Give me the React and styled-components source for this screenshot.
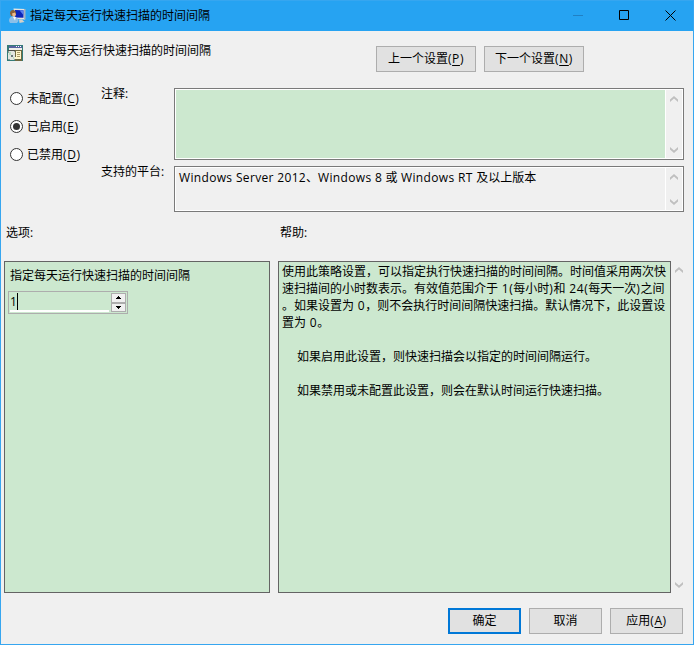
import { useState } from "react";
import styled, { createGlobalStyle } from "styled-components";

const helpLines = [
  "使用此策略设置，可以指定执行快速扫描的时间间隔。时间值采用两次快",
  "速扫描间的小时数表示。有效值范围介于 1(每小时)和 24(每天一次)之间",
  "。如果设置为 0，则不会执行时间间隔快速扫描。默认情况下，此设置设",
  "置为 0。",
  "",
  "    如果启用此设置，则快速扫描会以指定的时间间隔运行。",
  "",
  "    如果禁用或未配置此设置，则会在默认时间运行快速扫描。",
];

const states = [
  { id: "none", label: "未配置", hotkey: "C" },
  { id: "on", label: "已启用", hotkey: "E" },
  { id: "off", label: "已禁用", hotkey: "D" },
];

// wraps the latin runs so that they can be spaced apart from the CJK text
function Mixed({ text, spacing }) {
  return text
    .split(/([ -~]+)/)
    .map((part, i) =>
      i % 2 ? (
        <Latin key={i} spacing={spacing}>
          {part}
        </Latin>
      ) : (
        part
      )
    );
}

function Hotkey({ children }) {
  return (
    <Latin spacing="0.6px">
      (<u>{children}</u>)
    </Latin>
  );
}

function PolicyIcon() {
  return (
    <svg width="17" height="16" viewBox="0 0 17 16">
      <path d="M4.500.5L16 1v10.500L6 11z" fill="#e4e4e0" />
      <path d="M15 1h1.500v10.500H15z" fill="#a9b3bd" />
      <path d="M6 2l8.500.3v7.500L6 9.500z" fill="#0c25b8" />
      <path d="M10.500 2.200l4 .1v5z" fill="#5b82ee" />
      <path d="M10 11.500h3l2.500 2.500-5 1z" fill="#d4d0c8" />
      <path d="M1 5.500Q1 2 4 2t3 3.500L6 8H2z" fill="#8b6238" />
      <path d="M3 5.500l3-1 1 2-1.500 3H4z" fill="#efbd8c" />
      <path d="M0 13q0-4.500 4-4.500 5 0 5.500 4.500L8 15H1z" fill="#8cbfe8" />
      <path d="M4 9l2 3.500L7 9z" fill="#f4f8fc" />
    </svg>
  );
}

function SettingIcon() {
  return (
    <svg width="16" height="16" viewBox="0 0 16 16" shapeRendering="crispEdges">
      <path d="M0 0h16v16H0z" fill="#357b78" />
      <path d="M2 1h13v2H2z" fill="#5663a0" />
      <path d="M9 1h1v1H9zM11 1h1v1h-1zM13 1h1v1h-1z" fill="#ffffff" />
      <path d="M2 3h13v2H2z" fill="#eeeee9" />
      <path d="M1 5h14v1H1z" fill="#4c4d4a" />
      <path d="M1 6h7v9H1z" fill="#8d9a99" />
      <path d="M2 6h5v1h1v7H7v1H3v-1H1V8h1z" fill="#e2e5e0" />
      <path d="M2 7h2v3H2zM6 12h1v2H6z" fill="#b6dbbd" />
      <path d="M4 10h2v2H4z" fill="#69777a" />
      <path d="M8 5h7v11H8z" fill="#6f6942" />
      <path d="M9 6h5v8H8v-2h1z" fill="#fff5cb" />
      <path d="M10 7h3v1h-3zM10 9h3v1h-3zM10 11h3v1h-3z" fill="#a99a68" />
    </svg>
  );
}

function Chevron({ down }) {
  return (
    <svg width="8" height="6" viewBox="0 0 8 6">
      <path
        d={down ? "M0 0l4 3.500L8 0v2.500L4 6 0 2.500z" : "M0 6l4-3.500L8 6V3.500L4 0 0 3.500z"}
        fill="#bfbfbf"
      />
    </svg>
  );
}

function ScrollBar() {
  return (
    <Scroll>
      <Chevron />
      <Chevron down />
    </Scroll>
  );
}

export default function App() {
  const [state, setState] = useState("on");
  const [hours, setHours] = useState(1);

  return (
    <>
      <GlobalStyle />
      <Dialog>
        <TitleBar>
          <PolicyIcon />
          <h1>指定每天运行快速扫描的时间间隔</h1>
          <Controls>
            <svg width="11" height="11" viewBox="0 0 11 11">
              <path d="M0 5.500h10" stroke="#2080c4" />
            </svg>
            <svg width="11" height="11" viewBox="0 0 11 11">
              <path d="M.5.5h9v9h-9z" fill="none" stroke="#000" />
            </svg>
            <svg width="11" height="11" viewBox="0 0 11 11">
              <path d="M.5.5l10 10M10.500.5l-10 10" stroke="#000" />
            </svg>
          </Controls>
        </TitleBar>

        <Header>
          <SettingIcon />
          <h2>指定每天运行快速扫描的时间间隔</h2>
          <Button width="100px">
            上一个设置<Hotkey>P</Hotkey>
          </Button>
          <Button width="100px">
            下一个设置<Hotkey>N</Hotkey>
          </Button>
        </Header>

        <Settings>
          <States>
            {states.map((s) => (
              <Radio key={s.id} onClick={() => setState(s.id)}>
                <Dot checked={state === s.id} />
                <span>
                  {s.label}
                  <Hotkey>{s.hotkey}</Hotkey>
                </span>
              </Radio>
            ))}
          </States>
          <Fields>
            <Label>注释:</Label>
            <Box color="#cce8cf">
              <p></p>
              <ScrollBar />
            </Box>
            <Label>支持的平台:</Label>
            <Box color="#f0f0f0">
              <p>
                <Mixed
                  text="Windows Server 2012、Windows 8 或 Windows RT 及以上版本"
                  spacing="0.34px"
                />
              </p>
              <ScrollBar />
            </Box>
          </Fields>
        </Settings>

        <Captions>
          <span>选项:</span>
          <span>帮助:</span>
        </Captions>

        <Panels>
          <Options>
            <p>指定每天运行快速扫描的时间间隔</p>
            <Spinner>
              <Value>
                <span>{hours}</span>
              </Value>
              <Arrows>
                <button onClick={() => setHours(Math.min(hours + 1, 24))}>
                  <svg width="5" height="3" viewBox="0 0 5 3">
                    <path d="M2 0h1v1h1v1h1v1H0V2h1V1h1z" />
                  </svg>
                </button>
                <button onClick={() => setHours(Math.max(hours - 1, 0))}>
                  <svg width="5" height="3" viewBox="0 0 5 3">
                    <path d="M0 0h5v1H4v1H3v1H2V2H1V1H0z" />
                  </svg>
                </button>
              </Arrows>
            </Spinner>
          </Options>
          <Help>
            <Mixed text={helpLines.join("\n")} spacing="0.6px" />
          </Help>
          <ScrollBar />
        </Panels>

        <Footer>
          <Button width="73px" primary="true">
            确定
          </Button>
          <Button width="73px">取消</Button>
          <Button width="73px">
            应用<Hotkey>A</Hotkey>
          </Button>
        </Footer>
      </Dialog>
    </>
  );
}

const GlobalStyle = createGlobalStyle`
  * {
    box-sizing: border-box;
    margin: 0;
    padding: 0;
  }

  body {
    overflow: hidden;
    font-family: "Open Sans", "Noto Sans CJK SC", sans-serif;
    font-size: 12px;
    line-height: 17px;
    color: #000000;
  }

  h1, h2 {
    font-size: 12px;
    font-weight: 400;
  }

  button {
    font: inherit;
    color: inherit;
  }

  u {
    text-underline-offset: 2px;
  }

  svg {
    display: block;
    flex-shrink: 0;
  }
`;

const Latin = styled.span`
  letter-spacing: ${(props) => props.spacing};
`;

const Dialog = styled.main`
  display: flex;
  flex-direction: column;
  width: 694px;
  height: 645px;
  border: 1px solid #36a6f0;
  background-color: #f0f0f0;
  white-space: nowrap;
`;

const TitleBar = styled.header`
  display: flex;
  align-items: center;
  height: 30px;
  padding-left: 8px;
  background-color: #26a3f2;

  h1 {
    margin: 0 0 1px 4px;
  }
`;

const Controls = styled.div`
  display: flex;
  gap: 35px;
  margin: 0 17px 1px auto;
`;

const Header = styled.section`
  display: flex;
  align-items: flex-start;
  gap: 8px;
  height: 57px;
  padding: 14px 0 0 6px;

  h2 {
    width: 337px;
    margin-top: -3px;
  }
`;

const Button = styled.button`
  width: ${(props) => props.width};
  height: 26px;
  margin-top: 1px;
  padding-bottom: 1px;
  background-color: #e1e1e1;
  border: ${(props) =>
    props.primary ? "2px solid #0078d7" : "1px solid #adadad"};
`;

const Settings = styled.section`
  display: flex;
  height: 124px;
`;

const States = styled.div`
  display: flex;
  flex-direction: column;
  gap: 11px;
  width: 100px;
  padding: 2px 0 0 9px;
`;

const Radio = styled.label`
  display: flex;
  align-items: center;
  gap: 4px;
  height: 17px;
`;

const Dot = styled.i`
  display: grid;
  place-items: center;
  width: 13px;
  height: 13px;
  border: 1px solid #333333;
  border-radius: 50%;
  background-color: #ffffff;

  &::after {
    content: "";
    width: 7px;
    height: 7px;
    border-radius: 50%;
    background-color: ${(props) => (props.checked ? "#333333" : "#ffffff")};
  }
`;

const Fields = styled.div`
  display: grid;
  grid-template-columns: 73px 510px;
  grid-template-rows: 72px 46px;
  row-gap: 6px;
`;

const Label = styled.span`
  margin-top: -3px;
`;

const Box = styled.div`
  display: flex;
  padding: 1px;
  border: 1px solid #7a7a7a;
  background-color: #ffffff;

  p {
    flex: 1;
    margin-right: 1px;
    padding: 1px 3px;
    background-color: ${(props) => props.color};
  }
`;

const Scroll = styled.div`
  display: flex;
  flex-direction: column;
  justify-content: space-between;
  align-items: center;
  width: 16px;
  padding: 6px 0 5px;
  background-color: #f0f0f0;
`;

const Captions = styled.div`
  display: grid;
  grid-template-columns: 274px 1fr;
  height: 49px;
  padding: 12px 0 0 5px;
`;

const Panels = styled.section`
  display: flex;
  height: 332px;
  padding-left: 3px;
`;

const Options = styled.div`
  width: 266px;
  margin-right: 8px;
  padding: 5px 3px;
  border: 1px solid #646464;
  background-color: #cce8cf;

  p {
    padding-left: 2px;
  }
`;

const Spinner = styled.div`
  display: flex;
  width: 120px;
  height: 23px;
  margin-top: 7px;
  padding: 1px;
  border: 1px solid #adadad;
`;

const Value = styled.div`
  flex: 1;
  margin-right: 2px;
  border-bottom: 2px solid #ffffff;

  span {
    display: inline-block;
    height: 17px;
    border-right: 1px solid #000000;
  }
`;

const Arrows = styled.div`
  display: flex;
  flex-direction: column;
  width: 15px;
  background-color: #f0f0f0;

  button {
    display: grid;
    place-items: center;
    flex: 1;
    border: 1px solid #adadad;
    background-color: #f0f0f0;
  }
`;

const Help = styled.div`
  width: 393px;
  padding: 1px 3px;
  border: 1px solid #646464;
  background-color: #cce8cf;
  white-space: pre;
`;

const Footer = styled.footer`
  display: flex;
  justify-content: flex-end;
  gap: 8px;
  padding: 14px 10px 0 0;
`;
